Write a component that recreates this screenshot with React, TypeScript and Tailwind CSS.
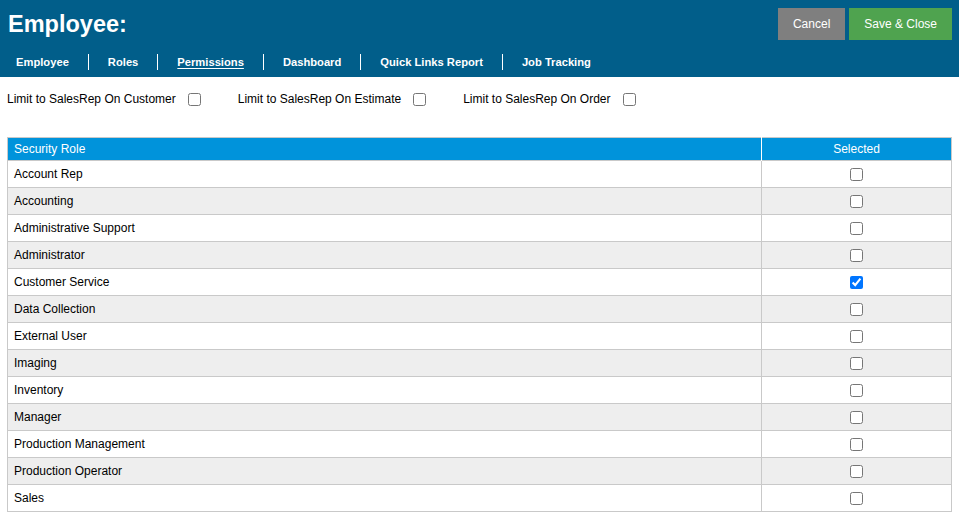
import { useState } from "react";

const tabs = ["Employee", "Roles", "Permissions", "Dashboard", "Quick Links Report", "Job Tracking"];

const roles = [
  "Account Rep",
  "Accounting",
  "Administrative Support",
  "Administrator",
  "Customer Service",
  "Data Collection",
  "External User",
  "Imaging",
  "Inventory",
  "Manager",
  "Production Management",
  "Production Operator",
  "Sales",
];

const limits = [
  "Limit to SalesRep On Customer",
  "Limit to SalesRep On Estimate",
  "Limit to SalesRep On Order",
];

export default function App() {
  const [selected, setSelected] = useState<Record<string, boolean>>({ "Customer Service": true });
  const [limitFlags, setLimitFlags] = useState<Record<string, boolean>>({});

  return (
    <div className="min-h-[520px] bg-white text-[12px] text-black" style={{ fontFamily: '"Liberation Sans", Arial, sans-serif' }}>
      {/* Top bar */}
      <div className="bg-[#015e8a]">
        <div className="flex items-start justify-between pl-2 pr-[7px] pt-2">
          <h1 className="text-[23.5px] font-bold leading-8 text-white">Employee:</h1>
          <div className="flex gap-1">
            <button className="h-8 bg-[#7f7f7f] px-[15px] text-[12px] text-white">Cancel</button>
            <button className="h-8 bg-[#4fa34f] px-[15px] text-[12px] text-white">Save &amp; Close</button>
          </div>
        </div>
        <nav className="mt-2 flex h-[29px] items-center pl-4">
          {tabs.map((tab, i) => (
            <div key={tab} className="flex items-center">
              {i > 0 && <span className="mx-[19px] h-4 w-px bg-white" />}
              <a
                href="#"
                className={`text-[11.2px] font-bold text-white ${tab === "Permissions" ? "underline underline-offset-2" : ""}`}
              >
                {tab}
              </a>
            </div>
          ))}
        </nav>
      </div>

      {/* Limit options */}
      <div className="flex items-center px-[7px] pt-[13px]">
        {limits.map((label, i) => (
          <label key={label} className={`flex items-center ${i > 0 ? "ml-[37px]" : ""}`}>
            <span>{label}</span>
            <input
              type="checkbox"
              className="ml-3 h-[13px] w-[13px]"
              checked={!!limitFlags[label]}
              onChange={() => setLimitFlags({ ...limitFlags, [label]: !limitFlags[label] })}
            />
          </label>
        ))}
      </div>

      {/* Roles table */}
      <div className="pl-[7px] pr-[7px] pt-[29px]">
        <table className="w-full border-collapse border border-[#c9c9c9]">
          <thead>
            <tr className="h-[23px] bg-[#0093db] text-white">
              <th className="px-[6px] text-left font-normal">Security Role</th>
              <th className="w-[190px] border-l border-white text-center font-normal">Selected</th>
            </tr>
          </thead>
          <tbody>
            {roles.map((role, i) => (
              <tr key={role} className={`h-[27px] border-t border-[#c9c9c9] ${i % 2 === 1 ? "bg-[#eeeeee]" : "bg-white"}`}>
                <td className="px-[6px]">{role}</td>
                <td className="border-l border-[#c9c9c9] text-center">
                  <input
                    type="checkbox"
                    className="h-[13px] w-[13px] align-middle"
                    checked={!!selected[role]}
                    onChange={() => setSelected({ ...selected, [role]: !selected[role] })}
                  />
                </td>
              </tr>
            ))}
          </tbody>
        </table>
      </div>
    </div>
  );
}
